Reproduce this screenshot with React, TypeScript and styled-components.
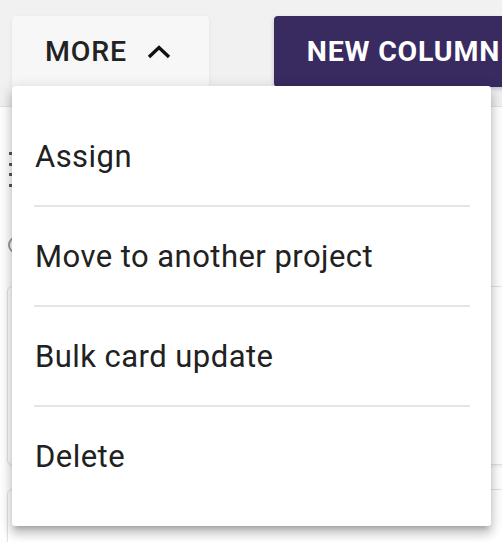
import React from "react";
import styled, { createGlobalStyle } from "styled-components";

const Global = createGlobalStyle`
  html, body { margin: 0; padding: 0; background: #ffffff; }
  body { font-family: Roboto, "Noto Sans", "Liberation Sans", sans-serif; overflow: hidden; }
  * { box-sizing: border-box; }
`;

const Page = styled.div`
  position: relative;
  width: 502px;
  height: 542px;
  overflow: hidden;
  background: #ffffff;
`;

const Header = styled.header`
  height: 107px;
  background: #f1f1f1;
  border-bottom: 1px solid #e2e2e2;
  display: flex;
  align-items: flex-start;
  padding: 16px 0 0 12px;
  gap: 65px;
`;

const Button = styled.button<{ $primary?: boolean }>`
  height: 71px;
  border: none;
  border-radius: 4px;
  display: flex;
  align-items: center;
  gap: 20px;
  font-family: Roboto, "Noto Sans", sans-serif;
  font-size: 28.5px;
  letter-spacing: 0.8px;
  text-transform: uppercase;
  white-space: nowrap;
  flex-shrink: 0;
  padding: ${(p) => (p.$primary ? "0 32px 0 33px" : "0 38px 0 33px")};
  font-weight: ${(p) => (p.$primary ? 700 : 500)};
  color: ${(p) => (p.$primary ? "#ffffff" : "#222222")};
  background: ${(p) => (p.$primary ? "#392a60" : "#f7f7f7")};
  box-shadow: ${(p) =>
    p.$primary
      ? "0 2px 4px rgba(0,0,0,0.2)"
      : "0 1px 5px rgba(0,0,0,0.06)"};
`;

const Chevron = styled.svg`
  width: 24px;
  height: 14px;
  display: block;
`;

const Body = styled.main`
  display: flex;
  flex-direction: column;
  padding: 45px 0 0 7px;
`;

const Handle = styled.div`
  display: grid;
  grid-template-rows: repeat(4, 3px);
  row-gap: 7.5px;
  margin-left: 2px;
  width: 3px;
`;

const Dot = styled.span`
  width: 3px;
  height: 3px;
  background: #5a5a5a;
`;

const Ring = styled.div`
  width: 18px;
  height: 18px;
  margin: 49px 0 0 1px;
  border-radius: 50%;
  border: 2px solid #9a9a9a;
`;

const Card = styled.div<{ $h: number; $top: number }>`
  height: ${(p) => p.$h}px;
  margin-top: ${(p) => p.$top}px;
  width: 520px;
  border: 1px solid #e3e3e3;
  border-radius: 5px;
  box-shadow: 0 2px 3px rgba(0, 0, 0, 0.06);
  background: #fff;
`;

const Menu = styled.ul`
  position: absolute;
  top: 86px;
  left: 12px;
  width: 479px;
  margin: 0;
  padding: 20px 0;
  list-style: none;
  background: #ffffff;
  border-radius: 3px;
  box-shadow: 0px 5px 5px -3px rgba(0, 0, 0, 0.2),
    0px 8px 10px 1px rgba(0, 0, 0, 0.14),
    0px 3px 14px 2px rgba(0, 0, 0, 0.12);
`;

const Item = styled.li`
  height: 100px;
  display: flex;
  align-items: center;
  padding: 0 23px;
  font-size: 31px;
  color: #212121;
  font-weight: 400;
  letter-spacing: 0.45px;
`;

const Divider = styled.li`
  height: 2px;
  margin: -1px 21px -1px 22px;
  background: #e5e5e5;
`;

const items = ["Assign", "Move to another project", "Bulk card update", "Delete"];

export default function App() {
  return (
    <Page>
      <Global />
      <Header>
        <Button>
          More
          <Chevron viewBox="0 0 24 14" aria-hidden>
            <path d="M2 12 L12 2.5 L22 12" fill="none" stroke="#111" strokeWidth="3.4" />
          </Chevron>
        </Button>
        <Button $primary>New column</Button>
      </Header>
      <Body>
        <Handle>
          <Dot />
          <Dot />
          <Dot />
          <Dot />
        </Handle>
        <Ring />
        <Card $h={179} $top={32} />
        <Card $h={80} $top={24} />
      </Body>
      <Menu>
        {items.map((t, i) => (
          <React.Fragment key={t}>
            {i > 0 && <Divider />}
            <Item>{t}</Item>
          </React.Fragment>
        ))}
      </Menu>
    </Page>
  );
}
